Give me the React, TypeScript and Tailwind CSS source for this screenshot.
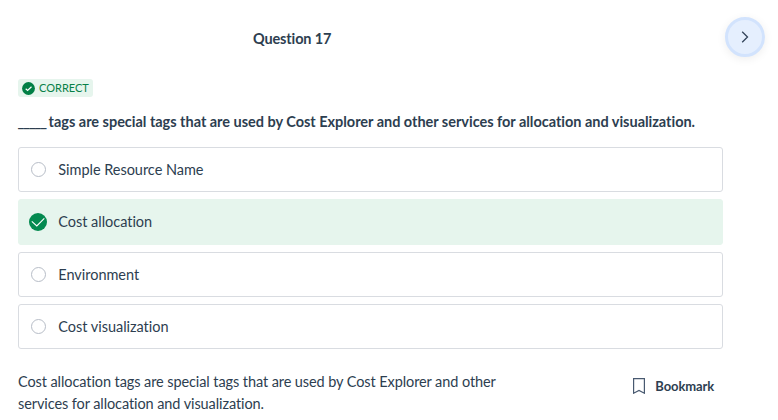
const options = ['Simple Resource Name', 'Cost allocation', 'Environment', 'Cost visualization'];

export default function App() {
  return (
    <main className="h-[420px] w-[778px] overflow-hidden bg-white pl-[18px] font-['Lato',sans-serif] text-[#2d3e50]">
      <header className="flex h-[79px] justify-end pr-[13px]">
        <h1 className="mt-[29px] mr-auto ml-[235px] text-[14.5px] leading-5 font-bold tracking-[-0.14px]">Question 17</h1>
        <button aria-label="Next question" className="mt-[17px] flex size-10 items-center justify-center rounded-full border-[3px] border-[#d2e3fd] bg-[#e5effe] shadow-[0_2px_10px_rgba(0,0,0,0.07)]">
          <svg width="8" height="12" viewBox="0 0 8 12" fill="none"><path d="m1.2.8 5.3 5.2-5.3 5.2" stroke="#33445a" strokeWidth="1.3" /></svg>
        </button>
      </header>
      <div className="flex h-[18px] w-[75px] items-center gap-1 rounded-[3px] bg-[#e6f5ed] pl-1 text-[11px] text-[#078047]">
        <svg width="13" height="13" viewBox="0 0 13 13" fill="none" className="shrink-0"><circle cx="6.5" cy="6.5" r="6.4" fill="#017f45" /><path d="m3.7 6.7 1.9 1.7 3.9-3.7" stroke="#fff" strokeWidth="1.2" /></svg>
        <span className="tracking-[0.01px]">CORRECT</span>
      </div>
      <h2 className="mt-[15px] flex text-[14.5px] leading-5 font-bold tracking-[-0.02px] whitespace-pre"><span className="-ml-[0.4px] w-[31px] tracking-[-1.1px]">_____</span><span>tags are special tags that are used by Cost Explorer and other services for allocation and visualization.</span></h2>
      <div className="mt-[15px] flex w-[705px] flex-col gap-[7px]">
        {options.map((option, i) => (
          <div key={option} className={`flex h-[45.3px] items-center gap-[11px] rounded-[3px] border pl-[10px] text-[14.5px] leading-5 tracking-[-0.03px] ${i === 1 ? 'border-[#e6f5ed] bg-[#e6f5ed]' : 'border-[#d9dce1]'}`}>
            {i === 1 ? (
              <svg width="18" height="18" viewBox="0 0 18 18" fill="none" className="shrink-0"><circle cx="9" cy="9" r="9" fill="#048a50" /><path d="m2.8 8.4 5 4.5 7.5-7.6" stroke="#fff" strokeWidth="1.1" /></svg>
            ) : <span className="ml-[2px] mr-px size-[15px] rounded-full border border-[#b7bdc7]" />}
            <span className="mt-[0.6px] ml-[0.3px]">{option}</span>
          </div>
        ))}
      </div>
      <footer className="mt-[21.8px] flex">
        <p className="w-[500px] text-[14.5px] leading-[22px] tracking-[-0.09px]">Cost allocation tags are special tags that are used by Cost Explorer and other services for allocation and visualization.</p>
        <div className="mt-[5px] ml-[115.3px] flex h-5 items-center gap-[10px] text-[13px] font-bold tracking-[-0.1px]">
          <svg width="12" height="16" viewBox="0 0 12 16" fill="none"><path d="M.6.6h10.8v14.6L6 12.5.6 15.2z" stroke="#485970" strokeWidth="1.2" /></svg><span className="mt-[1.4px]">Bookmark</span>
        </div>
      </footer>
    </main>
  );
}
